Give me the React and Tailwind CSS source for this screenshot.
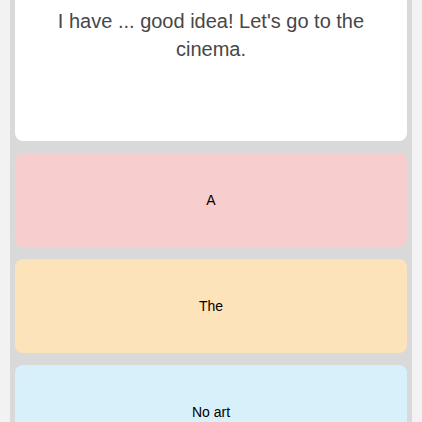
export default function App() {
  const options = [
    { label: 'A', bg: 'bg-[#f7cdcd]' },
    { label: 'The', bg: 'bg-[#fde3b9]' },
    { label: 'No art', bg: 'bg-[#d8f0fa]' },
  ]

  return (
    <div className="h-[422px] overflow-hidden bg-[#f2f2f2] px-[10px] font-['Liberation_Sans',Arial,sans-serif]">
      <div className="flex h-full flex-col gap-3 bg-[#d9d9d9] px-[5px]">
        <div className="h-[141px] shrink-0 rounded-b-lg bg-white px-10 pt-[7px] text-center text-[20px] leading-[28px] text-[#474747]">
          I have ... good idea! Let's go to the cinema.
        </div>
        {options.map((o) => (
          <div
            key={o.label}
            className={`flex h-[94px] shrink-0 items-center justify-center rounded-lg text-[14px] text-black ${o.bg}`}
          >
            {o.label}
          </div>
        ))}
      </div>
    </div>
  )
}
